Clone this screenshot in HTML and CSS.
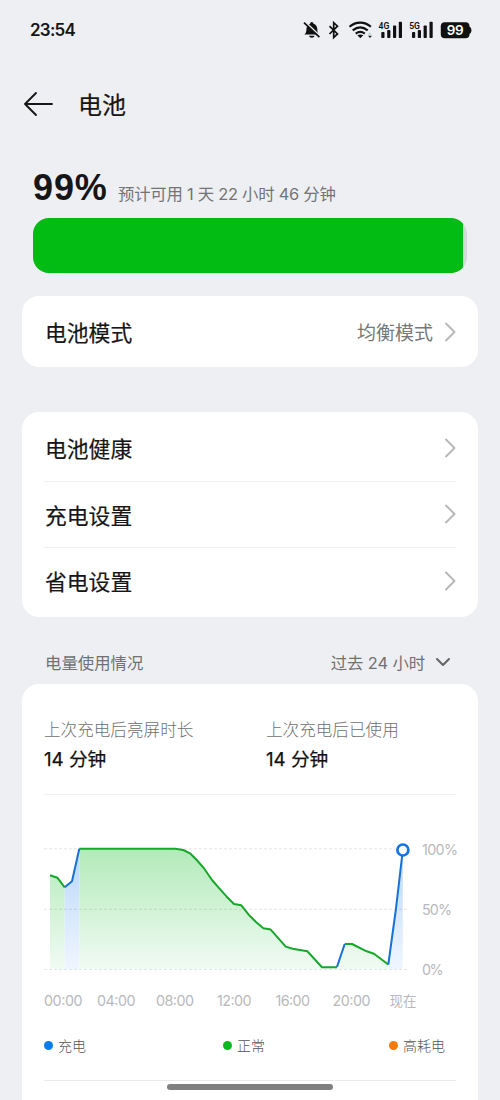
FILE: index.html
```html
<!DOCTYPE html>
<html lang="zh-CN">
<head>
<meta charset="utf-8">
<title>电池</title>
<link rel="stylesheet" href="styles.css">
</head>
<body>
<div class="screen">
  <div class="status">
    <span class="clock">23:54</span>
    <svg class="status-icons" width="174" height="24" viewBox="300 18 174 24">
      <g fill="#111">
        <path d="M304.300 34.600c1.500-1 2-2.400 2.100-5 .1-3.400 1.500-5.300 3.700-5.900a1.700 1.700 0 0 1 3.400 0c2.500.6 3.700 2.700 3.800 5.600.1 3 .5 4.100 2.100 5.300z"/>
        <path d="M309 35.800h5.600c-.4 1.200-1.300 1.900-2.800 1.900s-2.400-.7-2.800-1.900z"/>
      </g>
      <path d="M305.200 21.900l15 14.200" stroke="#eeeff3" stroke-width="1.600"/>
      <path d="M304 22.700l15.400 14.500" stroke="#111" stroke-width="1.700"/>
      <path d="M329.500 26.200l8 7.800-3.800 3.500V22.700l3.800 3.500-8 7.800" fill="none" stroke="#111" stroke-width="1.700"/>
      <g fill="none" stroke="#111" stroke-width="2.100">
        <path d="M349.500 26.700c6.400-5.400 15-5.400 21.400 0"/>
        <path d="M352.700 30.300c4.700-3.700 10.300-3.700 15 0"/>
        <path d="M355.700 33.600c2.900-2.200 6.200-2.200 9.100 0"/>
      </g>
      <path d="M357.300 35.300q3-1.800 6 0l-3 3z" fill="#111"/>
      <path d="M367.500 34.400h4l-2-2z" fill="#b9cec6"/><path d="M368 35.800h4l-2 2.200z" fill="#222"/>
      <g fill="#111">
        <rect x="381.300" y="32" width="3.200" height="6" rx=".8"/><rect x="387.200" y="30" width="3.200" height="8" rx=".8"/><rect x="393" y="25.500" width="3.200" height="12.500" rx=".8"/><rect x="398.800" y="21.800" width="3.200" height="16.200" rx=".8"/>
        <rect x="412" y="32" width="3.200" height="6" rx=".8"/><rect x="417.800" y="30" width="3.200" height="8" rx=".8"/><rect x="423.600" y="25.500" width="3.200" height="12.500" rx=".8"/><rect x="429.500" y="21.800" width="3.200" height="16.200" rx=".8"/>
        <rect x="440.800" y="22.300" width="28.700" height="16" rx="4"/><path d="M469 26.700q2.400.3 2.400 3.600t-2.400 3.600z"/>
      </g>
      <text class="net" x="378.500" y="28.700" textLength="10.800" lengthAdjust="spacingAndGlyphs">4G</text>
      <text class="net" x="409.200" y="28.700" textLength="10.800" lengthAdjust="spacingAndGlyphs">5G</text>
      <text class="batt" x="455.200" y="35.400" textLength="17">99</text>
    </svg>
  </div>

  <header class="header">
    <svg width="30" height="26" viewBox="0 0 30 26"><path d="M13 2L2 13l11 11M2 13h27" fill="none" stroke="#161616" stroke-width="1.900" stroke-linecap="round" stroke-linejoin="round"/></svg>
    <h1 class="title">电池</h1>
  </header>

  <section class="summary">
    <span class="percent">99%</span>
    <span class="estimate">预计可用 1 天 22 小时 46 分钟</span>
  </section>
  <div class="level"><div class="level-fill"></div></div>

  <div class="card mode">
    <div class="row"><span class="label">电池模式</span><span class="value">均衡模式</span><svg class="chev" width="12" height="20" viewBox="0 0 12 20"><path d="M2 1.500l8.500 8.500L2 18.500"/></svg></div>
  </div>

  <div class="card settings">
    <div class="row"><span class="label">电池健康</span><svg class="chev" width="12" height="20" viewBox="0 0 12 20"><path d="M2 1.500l8.500 8.500L2 18.500"/></svg></div>
    <div class="row"><span class="label">充电设置</span><svg class="chev" width="12" height="20" viewBox="0 0 12 20"><path d="M2 1.500l8.500 8.500L2 18.500"/></svg></div>
    <div class="row"><span class="label">省电设置</span><svg class="chev" width="12" height="20" viewBox="0 0 12 20"><path d="M2 1.500l8.500 8.500L2 18.500"/></svg></div>
  </div>

  <div class="section-head">
    <span>电量使用情况</span>
    <span class="range">过去 24 小时</span>
    <svg width="16" height="12" viewBox="0 0 16 12"><path d="M2 2l6 6 6-6" fill="none" stroke="#666" stroke-width="2.100" stroke-linecap="round" stroke-linejoin="round"/></svg>
  </div>

  <div class="card usage">
    <div class="stats">
      <div class="stat"><div class="stat-label">上次充电后亮屏时长</div><div class="stat-value">14 分钟</div></div>
      <div class="stat"><div class="stat-label">上次充电后已使用</div><div class="stat-value">14 分钟</div></div>
    </div>
    <svg class="chart" width="456" height="200" viewBox="22 820 456 200">
      <defs>
        <linearGradient id="green" gradientUnits="userSpaceOnUse" x1="0" y1="849" x2="0" y2="969"><stop offset="0" stop-color="#b2eab9"/><stop offset="1" stop-color="#f1fbf3"/></linearGradient>
        <linearGradient id="blue" gradientUnits="userSpaceOnUse" x1="0" y1="849" x2="0" y2="969"><stop offset="0" stop-color="#b8d7fa"/><stop offset="1" stop-color="#f0f6ff"/></linearGradient>
      </defs>
      <g fill="url(#green)">
        <path d="M50 969V875.200l7.300 2.500 7.400 9.600V969z"/>
        <path d="M79.300 969V848.800h96l8 1.200 6.700 3.300 6.700 6.700 7.600 8.700 7.700 11.300 7.300 8.300 7.400 8.400 7.300 7.300 7.300 1.300 7.400 9.400 7.300 7.300 7.300 6.300 7.400 1.300 15 17 7 2.200 14.600 2.500 14.700 15.900h15V969z"/>
        <path d="M337 969v-2.100l7.700-22.900h7.300l14.700 7.300 7.300 2.400 14.300 10.800v4.500z"/>
      </g>
      <g fill="url(#blue)">
        <path d="M64.700 969v-81.700l7.300-6 7.300-32.500V969z"/>
        <path d="M388.300 969v-4.500l7.700-56 6.800-58.500V969z"/>
      </g>
      <path class="grid" d="M44 848.800h364M44 909.300h364M44 969.500h364"/>
      <g class="line normal">
        <path d="M50 875.200l7.300 2.500 7.400 9.600"/>
        <path d="M79.300 848.800h96l8 1.200 6.700 3.300 6.700 6.700 7.600 8.700 7.700 11.300 7.300 8.300 7.400 8.400 7.300 7.300 7.300 1.300 7.400 9.400 7.300 7.300 7.300 6.300 7.400 1.300 15 17 7 2.200 14.600 2.500 14.700 15.900h15"/>
        <path d="M344.700 944h7.300l14.700 7.300 7.300 2.400 14.300 10.800"/>
      </g>
      <g class="line charging">
        <path d="M64.700 887.300l7.300-6 7.300-32.500"/>
        <path d="M337 966.900l7.700-22.900"/>
        <path d="M388.300 964.500l7.700-56 6.800-58.500"/>
      </g>
      <circle cx="402.900" cy="850" r="5.500" fill="#fff" stroke="#1474e2" stroke-width="2.700"/>
      <g class="axis">
        <text x="422" y="855" textLength="36">100%</text>
        <text x="422" y="915.300" textLength="30">50%</text>
        <text x="422" y="975.300" textLength="21.500">0%</text>
        <text x="44" y="1006" textLength="38.500">00:00</text>
        <text x="97" y="1006" textLength="38.500">04:00</text>
        <text x="156" y="1006" textLength="38">08:00</text>
        <text x="217" y="1006" textLength="34.500">12:00</text>
        <text x="275.500" y="1006" textLength="34.500">16:00</text>
        <text x="332.500" y="1006" textLength="38">20:00</text>
        <text x="389.500" y="1005.500" class="now">现在</text>
      </g>
    </svg>
    <div class="legend">
      <span class="key"><i class="dot dot-blue"></i>充电</span>
      <span class="key key-mid"><i class="dot dot-green"></i>正常</span>
      <span class="key"><i class="dot dot-orange"></i>高耗电</span>
    </div>
  </div>
  <div class="home-bar"></div>
</div>
</body>
</html>
```

FILE: styles.css
```css
* { box-sizing: border-box; }
body { margin: 0; background: #eeeff3; font-family: Inter, "Noto Sans CJK SC", sans-serif; color: #161616; }
.screen { position: relative; width: 500px; height: 1100px; overflow: hidden; display: flex; flex-direction: column; }
.status { height: 60px; flex: none; padding: 0 26px 0 30px; display: flex; align-items: center; justify-content: space-between; }
.clock { font-size: 17px; font-weight: 600; letter-spacing: -.75px; }
.status-icons { display: block; }
.net { font: 600 9.600px Roboto, sans-serif; fill: #111; }
.batt { font: 600 13.500px Inter, sans-serif; fill: #fff; text-anchor: middle; }
.header { height: 88px; flex: none; padding-left: 23px; display: flex; align-items: center; gap: 25px; }
.title { margin: 0; padding-top: 3px; font-size: 24px; line-height: 34px; font-weight: 400; -webkit-text-stroke: .2px #161616; }
.summary { height: 70px; flex: none; padding: 18px 0 0 33px; display: flex; align-items: baseline; gap: 10px; white-space: nowrap; }
.percent { width: 75px; font-family: "Liberation Sans", sans-serif; font-size: 36px; line-height: 44px; font-weight: 700; letter-spacing: .9px; }
.estimate { font-size: 16.400px; letter-spacing: -.25px; color: #737476; }
.level { height: 55px; flex: none; margin: 0 33px; border-radius: 16px; background: #d7d8dc; overflow: hidden; }
.level-fill { width: 99%; height: 100%; background: #02bb13; border-radius: 0 10px 10px 0 / 0 6px 6px 0; }
.card { flex: none; margin: 0 22px; background: #fff; border-radius: 17px; padding: 0 22px; }
.mode { height: 71.500px; margin-top: 22.500px; }
.mode .row { height: 72px; }
.settings { height: 205px; margin-top: 44.500px; padding-top: 3px; }
.settings .row { height: 66.300px; }
.settings .row + .row { border-top: 1px solid #f0f0f1; }
.row { display: flex; align-items: center; font-size: 21.800px; }
.label { padding-left: 1px; -webkit-text-stroke: .2px #161616; }
.value { margin-left: auto; margin-right: 11px; font-size: 19px; color: #77787a; }
.chev { margin-left: auto; fill: none; stroke: #b7b7b9; stroke-width: 1.900; stroke-linecap: round; stroke-linejoin: round; }
.value + .chev { margin-left: 0; }
.section-head { height: 67.500px; flex: none; padding: 25px 49px 0 45px; display: flex; align-items: center; line-height: 24px; font-size: 16.400px; color: #707174; }
.section-head .range { margin-left: auto; margin-right: 10px; letter-spacing: -.1px; }
.usage { height: 440px; border-radius: 17px 17px 0 0; padding: 0; }
.stats { height: 111px; margin: 0 22px; padding-top: 34px; display: grid; grid-template-columns: 222px 1fr; border-bottom: 1px solid #f0f0f1; }
.stat-label { font-size: 16.600px; line-height: 24px; color: #6f6f71; font-weight: 300; }
.stat-value { font-size: 18.700px; line-height: 28px; margin-top: 4px; font-weight: 400; color: #111; -webkit-text-stroke: .25px #111; }
.chart { display: block; margin-top: 25px; }
.grid { stroke: #000; stroke-opacity: .1; stroke-width: 1; stroke-dasharray: 3 2; }
.line { fill: none; stroke-width: 2; stroke-linejoin: round; }
.normal { stroke: #16a72b; }
.charging { stroke: #1772d4; }
.axis { font: 400 14.300px Inter, "Noto Sans CJK SC", sans-serif; fill: #b9b9bb; }
.now { font-size: 13.500px; }
.legend { height: 61px; margin: 0 22px; padding: 14px 11px 0 0; display: flex; justify-content: space-between; border-bottom: 1px solid #ebebed; }
.key { display: flex; align-items: center; height: 22px; font-size: 14px; font-weight: 300; color: #555; }
.key-mid { margin-left: 13px; }
.dot { width: 9px; height: 9px; border-radius: 50%; margin-right: 5px; }
.dot-blue { background: #087bee; }
.dot-green { background: #09b91f; }
.dot-orange { background: #f47b0b; }
.home-bar { position: absolute; left: 167px; top: 1084px; width: 166px; height: 6px; border-radius: 3px; background: #808080; }
```
